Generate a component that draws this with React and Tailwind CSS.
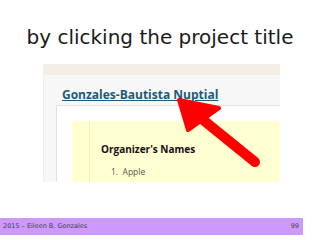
import React from 'react';

const Arrow = () => (
  <svg className="absolute left-0 top-0" width="320" height="240" viewBox="0 0 320 240">
    <line x1="197" y1="115" x2="255" y2="162" stroke="#ff0000" strokeWidth="10" strokeLinecap="round" />
    <polygon points="179,100 219,108 188,130" fill="#ff0000" stroke="#ff0000" strokeWidth="4" strokeLinejoin="round" />
  </svg>
);

export default function App() {
  return (
    <div className="relative w-[320px] h-[240px] bg-white overflow-hidden" style={{ fontFamily: '"Liberation Sans", sans-serif' }}>
      {/* slide title */}
      <div className="h-[64px] pt-[26px] text-center text-[20px] leading-[22px] text-[#1a1a1a]" style={{ fontFamily: '"DejaVu Sans", sans-serif' }}>
        by clicking the project title
      </div>

      {/* screenshot */}
      <div className="ml-[43px] w-[237px] h-[118px] flex flex-col overflow-hidden">
        <div className="h-[11px] bg-[#f4eee6]" />
        <div className="flex-1 flex flex-col bg-[#f7f7f7] border-l border-[#ececec]">
          <div className="h-[30px] pl-[18px] pt-[7px]">
            <span className="text-[12px] leading-[14px] font-bold text-[#1d5a78] underline underline-offset-[1px]" style={{ fontFamily: '"Open Sans", sans-serif' }}>
              Gonzales-Bautista Nuptial
            </span>
          </div>
          <div className="flex-1 ml-[12px] bg-white border-l border-t border-[#e2e2e2] pl-[15px] pt-[15px]">
            <div className="h-full bg-[#ffffd2] flex">
              <div className="w-[18px] border-r border-[#efefc0]" />
              <div className="flex-1 pl-[11px] pt-[22px]" style={{ fontFamily: '"Open Sans", sans-serif' }}>
                <div className="text-[10px] leading-[12px] font-bold text-[#111]">Organizer's Names</div>
                <div className="mt-[12px] ml-[10px] text-[8.5px] leading-[10px] text-[#555]">1.&nbsp; Apple</div>
              </div>
            </div>
          </div>
        </div>
      </div>

      {/* footer */}
      <div className="mt-[36px] w-[303px] h-[17px] bg-[#cc99ff] flex items-center justify-between pl-[3px] pr-[4px] text-[6.5px] text-[#444]" style={{ fontFamily: '"DejaVu Sans", sans-serif' }}>
        <span>2015 – Eileen B. Gonzales</span>
        <span>99</span>
      </div>

      <Arrow />
    </div>
  );
}
